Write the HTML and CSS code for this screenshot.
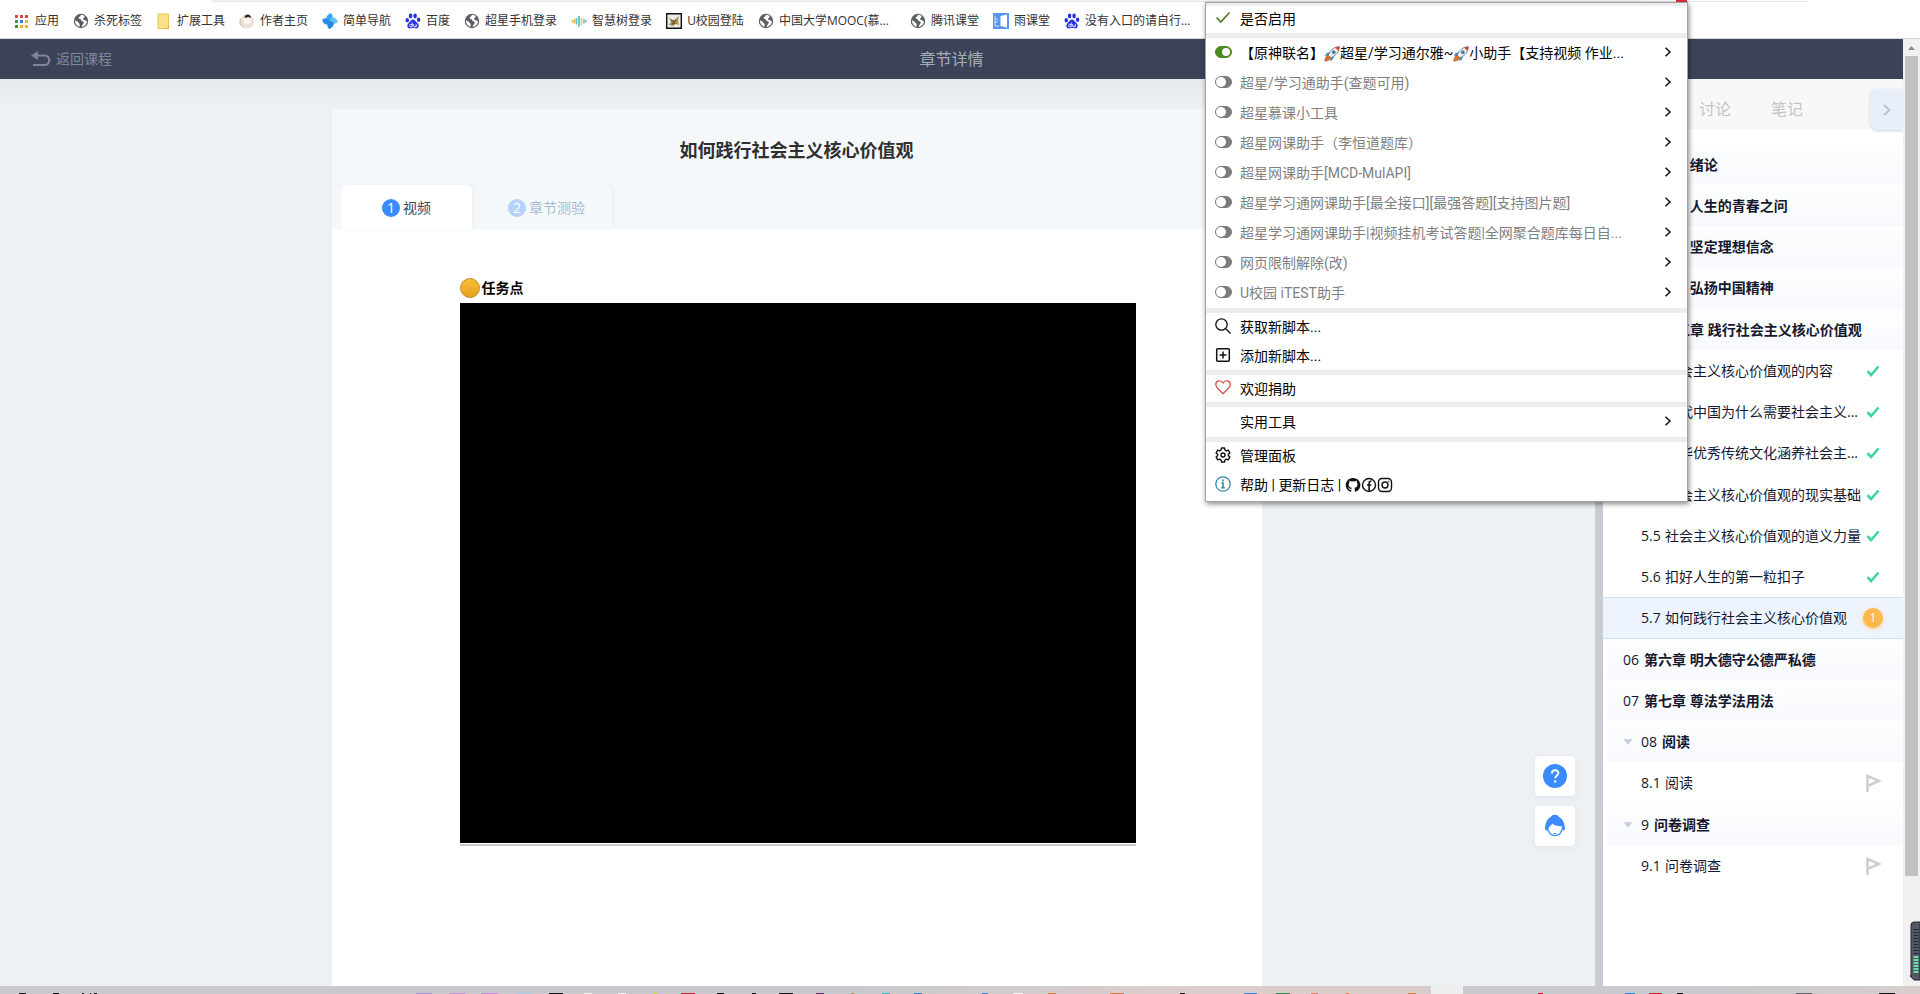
FILE: index.html
```html
<!DOCTYPE html>
<html lang="zh-CN">
<head>
<meta charset="utf-8">
<title>章节详情</title>
<link rel="stylesheet" href="styles.css">
</head>
<body>
<svg class="defs" aria-hidden="true">
  <symbol id="globe" viewBox="0 0 16 16"><circle cx="8" cy="8" r="7.2" fill="#5a5e63"/><path d="M8.6 1.8c-1.6.6-1.2 1.8-2.4 2.3-1 .5-.7 1.6.4 1.8 1.500.3 1.900 1 1.800 2 1.800.2 2.700 1 2.200 2.300-.4 1.200-1.700 1.500-1.900 3.700 3-.6 5.200-2.800 5.300-5.900-1.200.2-1.500-.9-2.600-1-1.500-.1-1.900-1-.7-1.900.9-.6.3-1.500 1.200-1.900-.9-.8-2-1.300-3.300-1.400zM2.100 7.200c1 1 2.600 1 3.200 2.300.5 1 1.500.9 1.400 2.100l-.2 2.200c-2.600-.7-4.400-3-4.500-5.600z" fill="#fff"/></symbol>
  <symbol id="baidu" viewBox="0 0 16 16"><g fill="#2932e1"><ellipse cx="2.300" cy="7.300" rx="1.700" ry="2.200"/><ellipse cx="5.600" cy="3" rx="1.800" ry="2.400"/><ellipse cx="10.100" cy="3" rx="1.800" ry="2.400"/><ellipse cx="13.600" cy="6.800" rx="1.700" ry="2.200"/><path d="M8 6.400c2 0 2.500 2 4.300 3.600 2.600 2.300 1.400 5.600-1.300 5.400-1.300-.1-1.800-.3-3-.3s-1.800.3-3 .3c-2.700.1-3.800-3-1.300-5.400C5.500 8.400 6 6.400 8 6.400z"/></g><path d="M7.200 9.500v4.300H5.500c-1.300 0-1.300-2.300 0-2.300h1.700M8.700 11.200v1.900c0 .7.500.7 1 .7h1.500v-2.600" fill="none" stroke="#fff" stroke-width=".9"/></symbol>
  <symbol id="rocket" viewBox="0 0 16 16"><path d="M5.500 6 2.400 7.300.8 10l3.400-.6M10 10.500l-1.200 3-2.700 1.800.6-3.600" fill="#3191c4"/><path d="M15.300.7C10.500.8 6.500 3.500 4.200 9.300l2.500 2.500c5.800-2.300 8.500-6.300 8.600-11.100z" fill="#e8f2f7" stroke="#43545f" stroke-width=".7"/><path d="M15.300.7c-1.600 0-3 .3-4.300.9l3.400 3.400c.6-1.300.9-2.700.9-4.300z" fill="#d9413b"/><circle cx="9.800" cy="6.200" r="1.500" fill="#2a8fc5" stroke="#44525c" stroke-width=".6"/><path d="M4.200 9.300c-2 .5-3.200 2.600-3.400 5.900 3.300-.2 5.400-1.400 5.900-3.400z" fill="#e8702a" stroke="#8b3a1e" stroke-width=".5"/></symbol>
  <symbol id="more" viewBox="0 0 8 10"><path d="M1.500.8 6 5 1.500 9.200" fill="none" stroke="#111" stroke-width="1.500"/></symbol>
  <symbol id="tick" viewBox="0 0 14 12"><path d="M1.500 6.200 5 10 12.500 1.500" fill="none" stroke="#3ed4a4" stroke-width="2.600"/></symbol>
  <symbol id="flag" viewBox="0 0 16 18"><path d="M2.500 18V2L14 7 3.500 11.500" fill="none" stroke="#cfcfcf" stroke-width="2.600"/></symbol>
  <symbol id="fold" viewBox="0 0 10 6"><path d="M.5.300h9L5 5.800z" fill="#c6cde0"/></symbol>
</svg>

<nav class="bookmarks" aria-label="书签">
  <a href="#"><svg viewBox="0 0 16 16"><g fill="#d64a3d"><path d="M1 2h3v3H1zM6 2h3v3H6zM11 2h3v3h-3z"/></g><path d="M1 7h3v3H1z" fill="#2f9a50"/><path d="M6 7h3v3H6z" fill="#3b7de8"/><path d="M11 7h3v3h-3zM6 12h3v3H6zM11 12h3v3h-3z" fill="#efb32b"/><path d="M1 12h3v3H1z" fill="#2f9a50"/></svg><span>应用</span></a>
  <a href="#"><svg><use href="#globe"/></svg><span>杀死标签</span></a>
  <a href="#"><svg viewBox="0 0 16 16"><path d="M2 1h10.500v14.500H2z" fill="#fbe08a" stroke="#eac65a"/><path d="M12.500 12v3.500H9.500" fill="none" stroke="#e2b23a"/></svg><span>扩展工具</span></a>
  <a href="#"><svg viewBox="0 0 16 16"><circle cx="8" cy="8.500" r="7" fill="#e9e2d9"/><circle cx="8.500" cy="7.500" r="3.800" fill="#fbf4ee"/><path d="M5.600 4.500C5.700.5 11.800.3 12 4.800c-1.500 0-2-1-3-.8-1.500.1-1.500 1.500-3.400.5z" fill="#33241f"/><path d="M1.500 6a7 7 0 0 0 3 8.300" fill="none" stroke="#cfae94"/></svg><span>作者主页</span></a>
  <a href="#"><svg viewBox="0 0 16 16"><path d="M8 8C2.500 7.500 3.300 2.500 8.800.1c2.700 2.600 2.500 4.800-.8 7.900z" fill="#37a5ee"/><path d="M8 8c.5-5.500 5.500-4.700 7.900.8C13.300 11.500 11.100 11.300 8 8z" fill="#5cc2f5"/><path d="M8 8c5.500.5 4.700 5.500-.8 7.900C4.500 13.300 4.700 11.100 8 8z" fill="#2384e2"/><path d="M8 8c-.5 5.500-5.500 4.700-7.900-.8C2.700 4.500 4.900 4.700 8 8z" fill="#2f8ae6"/></svg><span>简单导航</span></a>
  <a href="#"><svg><use href="#baidu"/></svg><span>百度</span></a>
  <a href="#"><svg><use href="#globe"/></svg><span>超星手机登录</span></a>
  <a href="#"><svg viewBox="0 0 16 16" fill="none" stroke-width="1.600"><path d="M1.500 7v2.500M3.500 6v4.500" stroke="#e8b84a"/><path d="M5.500 5v6.500M13 6v4.500" stroke="#69b8e8"/><path d="M8 3v10.500M15 7.500v1.500" stroke="#3fbe9e"/><path d="M10.500 5v7" stroke="#e6cf50"/></svg><span>智慧树登录</span></a>
  <a href="#"><svg viewBox="0 0 16 16"><path d="M.7.7h14.600v14.600H.7z" fill="#e9edf0" stroke="#111" stroke-width="1.400"/><path d="M3 4l3 3 3-.5L13 3l-1 5 1 4-3-1-3 2-4-1 2-3z" fill="#b18a46"/><path d="M5 7l3 2 2-2M6 11l3-1" stroke="#4d4637" fill="none"/></svg><span>U校园登陆</span></a>
  <a href="#" class="wide"><svg><use href="#globe"/></svg><span>中国大学MOOC(慕...</span></a>
  <a href="#"><svg><use href="#globe"/></svg><span>腾讯课堂</span></a>
  <a href="#"><svg viewBox="0 0 16 16"><path d="M0 0h16v16H0z" fill="#5b95ea"/><path d="M7.500 3 14 1.500v13L7.500 13z" fill="#fff"/><path d="M2 3v10h4M2 6h3M2 9h3" stroke="#cfe2ff" fill="none"/></svg><span>雨课堂</span></a>
  <a href="#"><svg><use href="#baidu"/></svg><span>没有入口的请自行...</span></a>
</nav>

<div class="viewport">
  <div class="page">
    <header class="topbar">
      <a href="#" class="back"><svg viewBox="0 0 20 16"><path d="M0 4.500 7 0v9z" fill="currentColor"/><path d="M6 4.500h7.500a4.600 4.600 0 0 1 0 9.500H2" fill="none" stroke="currentColor" stroke-width="2.200"/></svg>返回课程</a>
      <h1>章节详情</h1>
    </header>
    <div class="columns">
      <main class="main">
        <article class="card">
          <div class="card-head">
            <h2>如何践行社会主义核心价值观</h2>
            <div class="tabs">
              <button class="tab on"><i>1</i>视频</button>
              <button class="tab"><i>2</i>章节测验</button>
            </div>
          </div>
          <section class="lesson">
            <div class="task"><span class="coin"></span>任务点</div>
            <div class="player"></div>
          </section>
        </article>
        <div class="floats">
          <button aria-label="帮助"><svg viewBox="0 0 24 24"><circle cx="12" cy="12" r="12" fill="#3b8bff"/><path d="M8.900 9.500c0-4.300 6.500-4.200 6.500-.4 0 2.300-3.100 2.500-3.200 5.200M12.200 16.200v2.200" fill="none" stroke="#fff" stroke-width="1.900"/></svg></button>
          <button aria-label="客服"><svg viewBox="0 0 24 24"><path d="M4.500 13C5 24.500 19 24.500 19.500 13" fill="#fff" stroke="#3b8bff" stroke-width="1.200"/><path d="M2 13.500c.6-2 .6-8 6-10.700C9.500.2 14 .2 15.700 2.700 21.300 5.500 21.400 11.500 22 13.500c.5 1.700-.8 3.300-2.300 3.300.3-2.200.2-3.300-1.200-4.600-3.500.2-7-.8-9.200-2.700-1.600 2.800-3.800 2.800-5 7.300C2.800 16.800 1.500 15.200 2 13.500z" fill="#3b8bff"/><path d="M10.500 19.500h3" stroke="#3b8bff"/></svg></button>
        </div>
      </main>
      <div class="splitter"></div>
      <aside class="sidebar">
        <div class="side-tabs">
          <button>章节</button><button>讨论</button><button>笔记</button>
          <button class="collapse" aria-label="收起"><svg viewBox="0 0 8 14"><path d="M1 2l5.500 5L1 12" fill="none" stroke="#b9c3d6" stroke-width="2"/></svg></button>
        </div>
        <ul class="toc">
          <li class="chapter"><a href="#"><em>01</em><b>第一章 绪论</b></a></li>
          <li class="chapter"><a href="#"><em>02</em><b>第二章 人生的青春之问</b></a></li>
          <li class="chapter"><a href="#"><em>03</em><b>第三章 坚定理想信念</b></a></li>
          <li class="chapter"><a href="#"><em>04</em><b>第四章 弘扬中国精神</b></a></li>
          <li class="chapter"><a href="#"><svg class="fold"><use href="#fold"/></svg><em>05</em><b>第五章 践行社会主义核心价值观</b></a></li>
          <li><a href="#"><em>5.1</em><span>社会主义核心价值观的内容</span><svg class="tick"><use href="#tick"/></svg></a></li>
          <li><a href="#"><em>5.2</em><span>当代中国为什么需要社会主义...</span><svg class="tick"><use href="#tick"/></svg></a></li>
          <li><a href="#"><em>5.3</em><span>中华优秀传统文化涵养社会主...</span><svg class="tick"><use href="#tick"/></svg></a></li>
          <li><a href="#"><em>5.4</em><span>社会主义核心价值观的现实基础</span><svg class="tick"><use href="#tick"/></svg></a></li>
          <li><a href="#"><em>5.5</em><span>社会主义核心价值观的道义力量</span><svg class="tick"><use href="#tick"/></svg></a></li>
          <li><a href="#"><em>5.6</em><span>扣好人生的第一粒扣子</span><svg class="tick"><use href="#tick"/></svg></a></li>
          <li class="active"><a href="#"><em>5.7</em><span>如何践行社会主义核心价值观</span><i class="todo">1</i></a></li>
          <li class="chapter"><a href="#"><em>06</em><b>第六章 明大德守公德严私德</b></a></li>
          <li class="chapter"><a href="#"><em>07</em><b>第七章 尊法学法用法</b></a></li>
          <li class="chapter"><a href="#"><svg class="fold"><use href="#fold"/></svg><em>08</em><b>阅读</b></a></li>
          <li><a href="#"><em>8.1</em><span>阅读</span><svg class="flag"><use href="#flag"/></svg></a></li>
          <li class="chapter"><a href="#"><svg class="fold"><use href="#fold"/></svg><em>9</em><b>问卷调查</b></a></li>
          <li><a href="#"><em>9.1</em><span>问卷调查</span><svg class="flag"><use href="#flag"/></svg></a></li>
        </ul>
      </aside>
    </div>
  </div>
  <div class="scrollbar"><svg viewBox="0 0 17 17"><path d="M5 11h7L8.500 7z" fill="#8c8c8c"/></svg><div class="thumb"></div></div>
</div>

<footer class="taskbar">
  <svg width="1920" height="8" viewBox="0 0 1920 8">
    <path d="M1431 0h32v8h-32z" fill="#f0efef"/>
    <g transform="translate(0 7)">
      <path d="M19 0h7v1h-7zM53 0h6v1h-6zM82 0h2v1h-2zM90 0h1v1h-1zM94 0h3v1h-3zM549 0h14v1h-14zM717 0h7v1h-7zM752 0h4v1h-4zM779 0h14v1h-14zM1180 0h5v1h-5zM1677 0h6v1h-6zM1879 0h16v1h-16z" fill="#16161c"/>
      <path d="M416 0h16v1h-16z" fill="#a18fe0"/><path d="M449 0h16v1h-16z" fill="#c195e0"/><path d="M481 0h17v1h-17z" fill="#d67be3"/><path d="M516 0h16v1h-16z" fill="#a8cbe4"/>
      <path d="M618 0h8v1h-8zM584 0h8v1h-8zM1013 0h10v1h-10z" fill="#f5f5f5"/><path d="M654 0h4v1h-4z" fill="#d8cf3a"/>
      <path d="M681 0h14v1h-14zM1649 0h13v1h-13zM1538 0h5v1h-5z" fill="#cc1632"/><path d="M816 0h8v1h-8z" fill="#582268"/>
      <path d="M851 0h3v1h-3zM1048 0h8v1h-8zM1110 0h14v1h-14zM1311 0h7v1h-7zM1346 0h3v1h-3zM1408 0h8v1h-8z" fill="#df7b42"/>
      <path d="M882 0h8v1h-8z" fill="#35b6bf"/><path d="M914 0h8v1h-8zM982 0h6v1h-6zM1244 0h13v1h-13zM1625 0h10v1h-10z" fill="#327fd0"/><path d="M1276 0h14v1h-14z" fill="#248850"/><path d="M1796 0h16v1h-16z" fill="#606064"/>
    </g>
  </svg>
</footer>

<svg class="meter" viewBox="0 0 10 60"><path d="M10 1H4a3 3 0 0 0-3 3v50l-1 1 4 4h6z" fill="#535763" stroke="#252833"/><path d="M6 8v26" stroke="#1e2a42" stroke-width="5" stroke-dasharray="1 2"/><path d="M6 35v18" stroke="#67dfad" stroke-width="5" stroke-dasharray="2 1"/></svg>

<div class="chrome-edge"><i></i></div>

<div class="menu" role="menu">
  <div class="group first"><button class="row"><svg class="ico" viewBox="0 0 16 16"><path d="M1.500 8.500 5.800 13 14.500 3.500" fill="none" stroke="#507d2d" stroke-width="1.800"/></svg><span>是否启用</span></button></div>
  <div class="group scripts">
    <label class="row live"><input type="checkbox" checked><span>【原神联名】<svg class="emoji"><use href="#rocket"/></svg>超星/学习通尔雅~<svg class="emoji"><use href="#rocket"/></svg>小助手【支持视频 作业...</span><svg class="more"><use href="#more"/></svg></label>
    <label class="row"><input type="checkbox"><span>超星/学习通助手(查题可用)</span><svg class="more"><use href="#more"/></svg></label>
    <label class="row"><input type="checkbox"><span>超星慕课小工具</span><svg class="more"><use href="#more"/></svg></label>
    <label class="row"><input type="checkbox"><span>超星网课助手（李恒道题库）</span><svg class="more"><use href="#more"/></svg></label>
    <label class="row"><input type="checkbox"><span>超星网课助手[MCD-MulAPI]</span><svg class="more"><use href="#more"/></svg></label>
    <label class="row"><input type="checkbox"><span>超星学习通网课助手[最全接口][最强答题][支持图片题]</span><svg class="more"><use href="#more"/></svg></label>
    <label class="row"><input type="checkbox"><span>超星学习通网课助手|视频挂机考试答题|全网聚合题库每日自...</span><svg class="more"><use href="#more"/></svg></label>
    <label class="row"><input type="checkbox"><span>网页限制解除(改)</span><svg class="more"><use href="#more"/></svg></label>
    <label class="row"><input type="checkbox"><span>U校园 iTEST助手</span><svg class="more"><use href="#more"/></svg></label>
  </div>
  <div class="group pair">
    <button class="row"><svg class="ico" viewBox="0 0 16 16" fill="none" stroke="#111" stroke-width="1.300"><circle cx="6.500" cy="6.500" r="5.700"/><path d="M10.700 10.700 15.500 15.500"/></svg><span>获取新脚本...</span></button>
    <button class="row"><svg class="ico" viewBox="0 0 16 16" fill="none" stroke="#111" stroke-width="1.500"><rect x="1.700" y="1.700" width="12.600" height="12.600" rx="1"/><path d="M8 4.500v7M4.500 8h7"/></svg><span>添加新脚本...</span></button>
  </div>
  <div class="group"><button class="row"><svg class="ico" viewBox="0 0 16 16"><path d="M8 14.600C5 11.800 .8 9 .8 5.300.8 1.200 6 .5 8 4c2-3.500 7.200-2.800 7.200 1.300 0 3.700-4.200 6.500-7.200 9.300z" fill="none" stroke="#d4473c" stroke-width="1.200"/></svg><span>欢迎捐助</span></button></div>
  <div class="group tools"><button class="row"><span class="ico"></span><span>实用工具</span><svg class="more"><use href="#more"/></svg></button></div>
  <div class="group pair last">
    <button class="row"><svg class="ico" viewBox="0 0 16 16" fill="none" stroke="#111" stroke-width="1.400" stroke-linejoin="round"><path d="M6.500 1h3l.5 2 1.300.8 2-.6L14.900 6l-1.500 1.300v1.400l1.500 1.300-1.600 2.800-2-.6-1.300.8-.5 2h-3L6 13l-1.300-.8-2 .6L1.100 10l1.500-1.300V7.300L1.100 6l1.600-2.800 2 .6L6 3z"/><circle cx="8" cy="8" r="2"/></svg><span>管理面板</span></button>
    <div class="row"><svg class="ico" viewBox="0 0 16 16"><circle cx="8" cy="8" r="7.200" fill="none" stroke="#2b8aa8" stroke-width="1.300"/><path d="M8 3.500v2M6.500 7H8v4.500M6.200 11.700h3.600" fill="none" stroke="#2b8aa8" stroke-width="1.600"/></svg><span class="links"><a href="#">帮助</a> | <a href="#">更新日志</a> | <a href="#" aria-label="GitHub"><svg viewBox="0 0 16 16"><path d="M8 1a7 7 0 0 0-2.300 13.700c.4.100.6-.2.600-.4v-1.500c-2 .4-2.400-.8-2.600-1.300-.2-.4-.6-.8-.8-1 .9-.4 1.600.5 1.900 1 .5.700 1.200.6 1.600.3 0-.4.200-.8.400-1C4.700 10.500 3.700 9.500 3.700 7.500c0-.8.300-1.500.7-1.900-.1-.5-.1-1.200.1-1.900.8 0 1.500.5 2 .8a7 7 0 0 1 3.200 0c.5-.4 1.200-.8 2-.8.200.8.200 1.400.1 1.900.4.500.7 1.100.7 1.900 0 2-1.100 3-3.200 3.200.3.300.5.800.5 1.500v2.100c0 .2.200.5.600.4A7 7 0 0 0 8 1z" fill="#111"/></svg></a><a href="#" aria-label="Facebook"><svg viewBox="0 0 16 16" fill="none" stroke="#111"><circle cx="8" cy="8" r="6.500" stroke-width="1.400"/><path d="M10.500 4.300H9.600c-1.200 0-1.500.7-1.500 1.600v8M6 8h4.300" stroke-width="1.600"/></svg></a><a href="#" aria-label="Instagram"><svg viewBox="0 0 16 16" fill="none" stroke="#111" stroke-width="1.400"><rect x="1.500" y="1.500" width="13" height="13" rx="3.500"/><circle cx="8" cy="8" r="3"/><path d="M11.300 4.500h1"/></svg></a></span></div>
  </div>
</div>
</body>
</html>
```

FILE: styles.css
```css
* { box-sizing: border-box; }
html, body { height: 100%; }
body {
  margin: 0;
  display: flex;
  flex-direction: column;
  overflow: hidden;
  background: #fff;
  color: #14182e;
  font: 14px/20px "Open Sans", "Noto Sans CJK SC", sans-serif;
}
a { color: inherit; text-decoration: none; }
button { border: 0; padding: 0; background: none; color: inherit; font: inherit; cursor: pointer; }
i, em { font-style: normal; }
svg { display: block; flex: none; }
.defs { position: absolute; width: 0; height: 0; }

/* bookmarks */
.bookmarks {
  flex: none;
  display: flex;
  align-items: center;
  gap: 14px;
  height: 39px;
  padding: 3px 14px 0;
  border-bottom: 1px solid #d3d8dc;
  font: 12px/16px "Open Sans", "Noto Sans CJK SC", sans-serif;
  color: #333;
}
.bookmarks a { display: flex; align-items: center; gap: 5px; white-space: nowrap; }
.bookmarks svg { width: 16px; height: 16px; }
.bookmarks .wide { min-width: 138px; }

.viewport { flex: 1; min-height: 0; display: flex; }
.page { flex: 1; min-width: 0; display: flex; flex-direction: column; }

/* top bar */
.topbar {
  flex: none;
  display: grid;
  grid-template-columns: 1fr auto 1fr;
  align-items: center;
  height: 40px;
  padding: 0 31px;
  background: #3c4359;
}
.back { display: flex; align-items: center; gap: 5px; color: #81879a; }
.back svg { width: 20px; height: 16px; }
.topbar h1 { margin: 0; color: #a9adb9; font-size: 16px; font-weight: 400; }

.columns { flex: 1; min-height: 0; display: flex; }
.main {
  position: relative;
  flex: 1;
  display: flex;
  justify-content: center;
  padding: 30px 2px 0 0;
  background: linear-gradient(#e6eaed, #edf1f4 24px);
}
.splitter { width: 8px; background: #c8cbd4; }

/* lesson card */
.card { width: 930px; display: flex; flex-direction: column; background: #fff; }
.card-head {
  display: flex;
  flex-direction: column;
  justify-content: space-between;
  height: 120px;
  padding: 28px 10px 0;
  background: #f4f8fb;
}
.card h2 { margin: 0; color: #2f2f2f; font-size: 18px; line-height: 26px; text-align: center; }
.tabs { display: flex; gap: 10px; }
.tab {
  display: flex;
  align-items: center;
  justify-content: center;
  gap: 3px;
  width: 130px;
  height: 44px;
  padding-top: 2px;
  border-radius: 6px 6px 0 0;
  background: #f5f9fc;
  box-shadow: 2px 0 4px #edf1f5;
  color: #a6bad4;
}
.tab.on { background: #fff; color: #3a4866; }
.tab i { width: 18px; height: 18px; border-radius: 9px; background: #b5d2fb; color: #fff; line-height: 18px; }
.tab.on i { background: #3b8bff; }
.lesson { padding: 46px 126px 0 128px; }
.task { display: flex; align-items: center; gap: 2px; height: 28px; padding-bottom: 2px; color: #000; font-weight: 700; }
.coin { width: 20px; height: 20px; border: 1px solid #c18f2d; border-radius: 10px; background: linear-gradient(#f5bd36, #e9a01f); }
.player { height: 543px; border-bottom: 2px solid #c9c9c9; background: linear-gradient(#000 540px, #fff 540px); }

.floats { position: absolute; right: 20px; bottom: 140px; display: grid; gap: 10px; }
.floats button { display: grid; place-items: center; width: 40px; height: 40px; border-radius: 4px; background: #fff; box-shadow: 0 1px 6px #dde2e8; }
.floats svg { width: 24px; height: 24px; }

/* sidebar */
.sidebar { width: 300px; background: #fff; }
.side-tabs { display: flex; align-items: center; gap: 40px; height: 50px; padding: 10px 0 0 24px; background: #f8f8f8; color: #c3c4c7; font-size: 16px; }
.collapse {
  display: grid;
  place-items: center;
  align-self: flex-start;
  width: 33px;
  height: 41px;
  margin-left: auto;
  border-radius: 8px 0 0 8px;
  background: #e8effb;
  box-shadow: 0 1px 3px #c9d3e3;
}
.collapse svg { width: 8px; height: 14px; }
.toc { margin: 0; padding: 15px 0 0; list-style: none; }
.toc li { height: 41px; }
.toc li:nth-child(4n) { height: 42px; }
.toc a { display: flex; align-items: center; height: 100%; padding: 0 18px 0 38px; white-space: nowrap; }
.chapter { margin-left: 4px; background: linear-gradient(#fdfeff, #f7f9fc); }
.toc .chapter a { padding-left: 16px; }
.toc em { min-width: 24px; }
.toc .chapter em { min-width: 0; margin-right: 5px; }
.toc span { flex: 1; }
.fold { width: 10px; height: 6px; margin-right: 8px; }
.tick { width: 14px; height: 12px; margin-right: 5px; }
.flag { width: 16px; height: 18px; margin-right: 4px; }
.toc .active { border: solid #cfe0f4; border-width: 1px 0; background: #eef4fe; }
.todo { width: 20px; height: 20px; margin-right: 2px; border-radius: 10px; background: #fcb94b; box-shadow: 0 1px 4px #fbd08b; color: #fff; font-size: 12px; text-align: center; }

.scrollbar { width: 17px; padding: 0 2px; background: #f1f1f1; }
.scrollbar svg { width: 17px; height: 17px; margin-left: -2px; }
.thumb { height: 820px; background: #c1c1c1; }

.taskbar { flex: none; height: 8px; overflow: hidden; background: linear-gradient(90deg, #c9c9cd 45%, #dccdcc 62%, #dbcdcc 74%, #c9cacd 76%, #c9cacd 90%, #d8cdcd); }
.meter { position: absolute; right: 0; bottom: 13px; width: 10px; height: 60px; }

/* lower edge of the browser's address bar */
.chrome-edge { position: absolute; top: 0; left: 212px; right: 112px; height: 2px; border-bottom: 1px solid #e6e6e6; background: linear-gradient(90deg, #f1f3f4 1430px, #fff 1430px); }
.chrome-edge i { position: absolute; right: 121px; width: 11px; height: 2px; background: #e02f3b; }

/* extension popup */
.menu {
  position: absolute;
  top: 2px;
  right: 232px;
  width: 483px;
  padding-top: 3px;
  border: 1px solid #a3a3a3;
  background: #ededed;
  box-shadow: 1px 2px 5px #0007;
  color: #000;
  font-family: Roboto, "Noto Sans CJK SC", sans-serif;
}
.group { background: #fff; margin-bottom: 5px; }
.row { display: flex; align-items: center; width: 100%; height: 27px; padding: 0 15px 0 9px; text-align: left; white-space: nowrap; }
.row > span:not(.ico) { flex: 1; }
.first .row { padding-bottom: 2px; }
.scripts .row, .tools .row { height: 30px; }
.scripts .row { color: #808080; }
.scripts .live { color: #000; }
.pair { display: grid; gap: 1px; }
.pair .row { height: 28px; }
.last { margin-bottom: 0; padding-bottom: 2px; }
.ico { width: 16px; height: 16px; margin-right: 9px; margin-bottom: 3px; }
.more { width: 8px; height: 10px; margin-bottom: 3px; }
.emoji { display: inline-block; width: 16px; height: 16px; vertical-align: -4px; }
.row input {
  appearance: none;
  flex: none;
  width: 17px;
  height: 12px;
  margin: 0 8px 3px 0;
  border: 1px solid #7f7b7b;
  border-radius: 6px;
  background: #7f7b7b;
}
.row input::before { content: ""; display: block; width: 10px; height: 10px; border-radius: 5px; background: #fff; }
.row input:checked { border-color: #4c8a1f; background: #4c8a1f; }
.row input:checked::before { width: 8px; height: 8px; margin: 1px 0 0 6px; }
.links svg { display: inline-block; width: 16px; height: 16px; vertical-align: -3px; }
```
